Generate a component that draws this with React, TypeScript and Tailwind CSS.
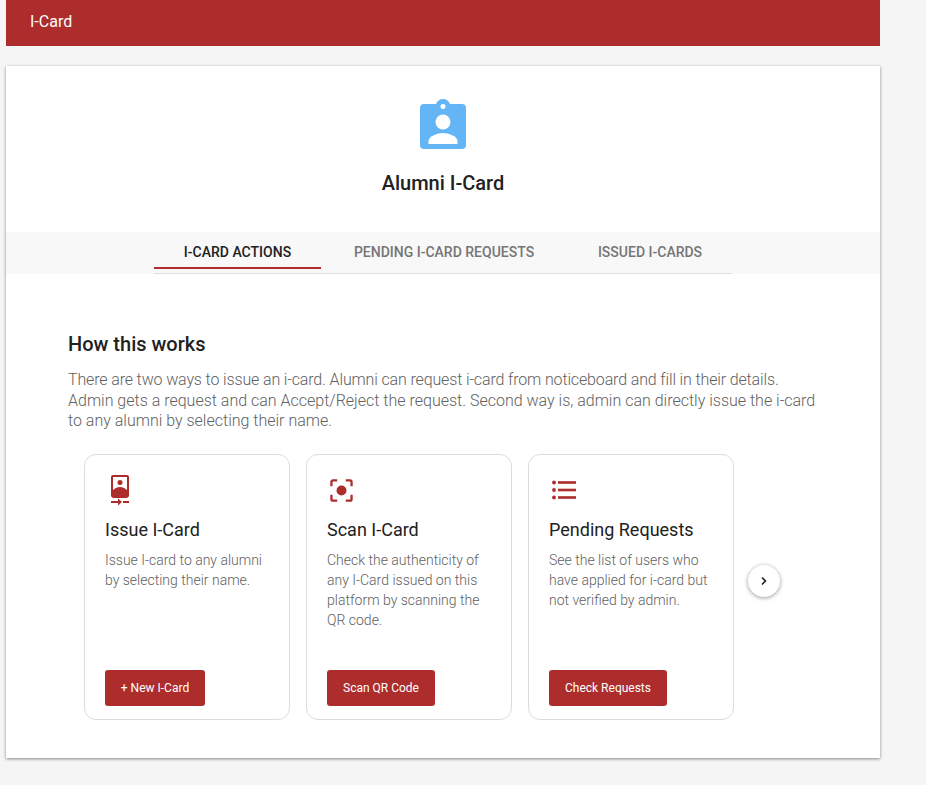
import React from 'react';

const RED = 'bg-[#ad2c2c]';

const IssueIcon = () => (
  <svg width="24" height="32" viewBox="0 0 24 32" className="text-[#ad2c2c]">
    <path
      fill="currentColor"
      fillRule="evenodd"
      d="M5 0h14a2 2 0 0 1 2 2v18a3 3 0 0 1-3 3H6a3 3 0 0 1-3-3V2a2 2 0 0 1 2-2ZM5 2v13c1.500-1.500 4-3 7-3s5.500 1.500 7 3V2H5Z"
    />
    <circle cx="12" cy="7.500" r="2.500" fill="currentColor" />
    <path fill="currentColor" d="M3 26h7v-2.500l4 3.500-4 3.500V28H3v-2ZM15 26h6v2h-6v-2Z" />
  </svg>
);

const ScanIcon = () => (
  <svg width="23" height="23" viewBox="0 0 24 24" fill="none" className="text-[#ad2c2c]">
    <path
      stroke="currentColor"
      strokeWidth="2.400"
      d="M7.500 1.500H3A1.500 1.500 0 0 0 1.500 3v4.500M16.500 1.500H21A1.500 1.500 0 0 1 22.500 3v4.500M7.500 22.500H3A1.500 1.500 0 0 1 1.500 21v-4.500M16.500 22.500H21a1.500 1.500 0 0 0 1.500-1.500v-4.500"
    />
    <circle cx="12" cy="12" r="5.200" fill="currentColor" />
  </svg>
);

const ListIcon = () => (
  <svg width="26" height="24" viewBox="0 0 26 24" className="text-[#ad2c2c]">
    <g fill="currentColor">
      <circle cx="3" cy="3.500" r="1.900" />
      <circle cx="3" cy="11" r="1.900" />
      <circle cx="3" cy="18.500" r="1.900" />
      <rect x="7" y="2.200" width="18" height="2.600" />
      <rect x="7" y="9.700" width="18" height="2.600" />
      <rect x="7" y="17.200" width="18" height="2.600" />
    </g>
  </svg>
);

const cards = [
  {
    title: 'Issue I-Card',
    desc: 'Issue I-card to any alumni by selecting their name.',
    button: '+ New I-Card',
    width: 'w-[100px]',
    iconClass: 'ml-[3px]',
    icon: <IssueIcon />,
  },
  {
    title: 'Scan I-Card',
    desc: 'Check the authenticity of any I-Card issued on this platform by scanning the QR code.',
    button: 'Scan QR Code',
    width: 'w-[108px]',
    iconClass: 'ml-[3px]',
    icon: <ScanIcon />,
  },
  {
    title: 'Pending Requests',
    desc: 'See the list of users who have applied for i-card but not verified by admin.',
    button: 'Check Requests',
    width: 'w-[118px]',
    iconClass: 'ml-[2px]',
    icon: <ListIcon />,
  },
];

export default function App() {
  return (
    <div className="min-h-[785px] bg-[#f5f5f5] pl-[6px] font-['Roboto',sans-serif]">
      <div className="w-[874px]">
        <header className={`${RED} flex h-[46px] items-center pb-[2px] pl-6 text-[16px] text-white`}>I-Card</header>

        <main className="mt-5 h-[692px] bg-white shadow-[0_1px_3px_rgba(0,0,0,0.45)]">
          <div className="flex h-[166px] flex-col items-center pt-[30px]">
            <svg width="50" height="56" viewBox="0 0 50 56">
              <path
                fill="#64b5f6"
                fillRule="evenodd"
                d="M6 8h12C19 5 21.500 3 25 3s6 2 7 5h12a4 4 0 0 1 4 4v37a4 4 0 0 1-4 4H6a4 4 0 0 1-4-4V12a4 4 0 0 1 4-4Zm19 5a2.500 2.500 0 1 0 0-5 2.500 2.500 0 0 0 0 5Z"
              />
              <circle cx="25" cy="26" r="7.500" fill="#fff" />
              <path fill="#fff" d="M10.500 48v-3C10.500 40 20 37 25 37s14.500 3 14.500 8v3H10.500Z" />
            </svg>
            <h1 className="mt-[19px] text-[20px] leading-6 font-medium text-[#212121]">Alumni I-Card</h1>
          </div>

          <nav className="h-[42px] bg-[#f8f8f8] pl-[148px]">
            <div className="flex h-[42px] w-[578px] border-b border-[#dedede] text-[14px] font-medium">
              <div className="flex h-[37px] w-[167px] items-center justify-center border-b-2 border-[#ad2c2c] pt-[6px] text-[#212121]">
                I-CARD ACTIONS
              </div>
              <div className="ml-[3px] flex h-[37px] w-[240px] items-center justify-center pt-[4px] text-[#757575]">
                PENDING I-CARD REQUESTS
              </div>
              <div className="ml-[4px] flex h-[37px] w-[164px] items-center justify-center pt-[4px] text-[#757575]">
                ISSUED I-CARDS
              </div>
            </div>
          </nav>

          <section className="pt-[58px] pl-[62px]">
            <h2 className="text-[20px] leading-6 font-medium text-[#212121]">How this works</h2>
            <p className="mt-[14px] w-[760px] text-[16px] leading-[20.500px] font-light text-[#616161]">
              <span className="block tracking-[-0.14px] whitespace-nowrap">
                There are two ways to issue an i-card. Alumni can request i-card from noticeboard and fill in their details.
              </span>
              Admin gets a request and can Accept/Reject the request. Second way is, admin can directly issue the i-card
              to any alumni by selecting their name.
            </p>

            <div className="mt-[22px] ml-4 flex items-start">
              <div className="flex gap-4">
                {cards.map((card) => (
                  <div key={card.title} className="flex h-[266px] w-[206px] flex-col rounded-xl border border-[#dcdcdc] px-5 pt-5 pb-[13px]">
                    <div className={`flex h-8 items-center ${card.iconClass}`}>{card.icon}</div>
                    <h3 className="mt-[11px] text-[18px] leading-6 text-[#212121]">{card.title}</h3>
                    <p className="mt-[8px] text-[14px] leading-5 font-light text-[#616161]">{card.desc}</p>
                    <button className={`${RED} ${card.width} mt-auto h-9 rounded-[3px] text-[12px] text-white`}>
                      {card.button}
                    </button>
                  </div>
                ))}
              </div>
              <button className="mt-[111px] ml-[14px] flex size-[32px] items-center justify-center rounded-full bg-white shadow-[0_1px_4px_rgba(0,0,0,0.4)]">
                <svg width="10" height="10" viewBox="0 0 10 10" fill="none">
                  <path d="M3 1.500 6.500 5 3 8.500" stroke="#212121" strokeWidth="1.600" />
                </svg>
              </button>
            </div>
          </section>
        </main>
      </div>
    </div>
  );
}
